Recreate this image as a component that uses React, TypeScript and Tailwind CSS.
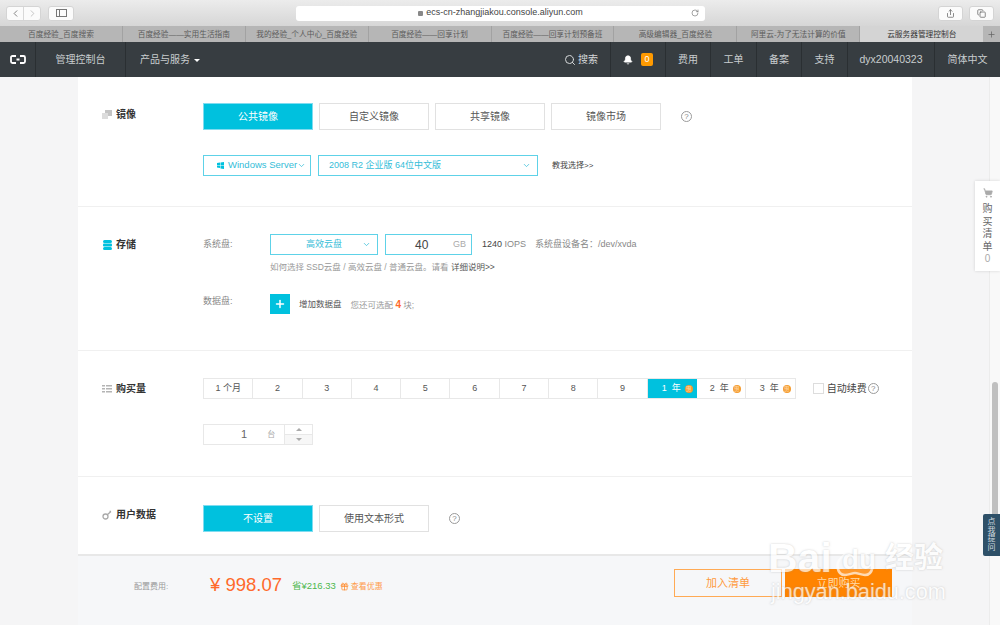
import { Bell, ChevronDown, ChevronLeft, ChevronRight, Copy, Gift, Plus, RotateCw, Search, Share, ShoppingCart } from "lucide-react";

const tabs = [
  "百度经验_百度搜索",
  "百度经验——实用生活指南",
  "我的经验_个人中心_百度经验",
  "百度经验——回享计划",
  "百度经验——回享计划预备班",
  "高级编辑器_百度经验",
  "阿里云-为了无法计算的价值",
];

const durations = ["1 个月", "2", "3", "4", "5", "6", "7", "8", "9"];

function Help({ className = "" }: { className?: string }) {
  return (
    <span className={`flex h-[11px] w-[11px] items-center justify-center rounded-full border border-[#9a9a9a] text-[8px] leading-none text-[#8a8a8a] ${className}`}>
      ?
    </span>
  );
}

function Coin() {
  return (
    <span className="ml-[4px] flex h-[8px] w-[8px] items-center justify-center rounded-full bg-[#f59a2c] text-[6px] leading-none text-[#ffd9a8]">
      惠
    </span>
  );
}

function Choice({ label, active = false }: { label: string; active?: boolean }) {
  return (
    <div
      className={`flex h-[27px] w-[110px] items-center justify-center border text-[10px] ${
        active ? "border-[#7fdcf0] bg-[#00c1de] text-white" : "border-[#e1e1e1] bg-white text-[#555]"
      }`}
    >
      {label}
    </div>
  );
}

export default function App() {
  return (
    <div
      className="relative flex h-[625px] w-[1000px] flex-col overflow-hidden bg-[#f5f5f6]"
      style={{ fontFamily: '"Liberation Sans", "Noto Sans CJK SC", sans-serif' }}
    >
      {/* Safari toolbar */}
      <div className="flex h-[26px] items-center bg-gradient-to-b from-[#ececec] to-[#d6d6d6] pl-[6px] pr-[6px]">
        <div className="flex h-[15px] w-[35px] rounded-[3px] border border-[#d4d4d4] bg-[#fbfbfb] text-[#777]">
          <div className="flex flex-1 items-center justify-center border-r border-[#d8d8d8]">
            <ChevronLeft size={11} />
          </div>
          <div className="flex flex-1 items-center justify-center text-[#c0c0c0]">
            <ChevronRight size={11} />
          </div>
        </div>
        <div className="ml-[7px] flex h-[15px] w-[26px] items-center justify-center rounded-[3px] border border-[#d4d4d4] bg-[#fbfbfb]">
          <div className="flex h-[8px] w-[11px] border border-[#777]">
            <div className="w-[3px] border-r border-[#777]" />
          </div>
        </div>
        <div className="relative ml-[222px] flex h-[15px] w-[409px] items-center justify-center rounded-[3px] bg-white text-[9px] text-[#444]">
          <span className="mr-[3px] h-[5px] w-[5px] rounded-[1px] bg-[#888]" />
          ecs-cn-zhangjiakou.console.aliyun.com
          <RotateCw size={8} className="absolute right-[6px] text-[#777]" />
        </div>
        <div className="ml-auto flex gap-[6px]">
          <div className="flex h-[15px] w-[25px] items-center justify-center rounded-[3px] border border-[#d4d4d4] bg-[#fbfbfb] text-[#666]">
            <Share size={9} />
          </div>
          <div className="flex h-[15px] w-[25px] items-center justify-center rounded-[3px] border border-[#d4d4d4] bg-[#fbfbfb] text-[#666]">
            <Copy size={9} />
          </div>
        </div>
      </div>

      {/* tabs */}
      <div className="flex h-[16px] bg-[#b6b6b6] text-[7.700px] text-[#5b5b5b]">
        {tabs.map((t) => (
          <div key={t} className="flex w-[122.900px] items-center justify-center border-r border-[#a2a2a2] pt-px">
            {t}
          </div>
        ))}
        <div className="flex w-[123px] items-center justify-center bg-[#d4d4d4] pt-px text-[#333]">云服务器管理控制台</div>
        <div className="flex flex-1 items-center justify-center bg-[#b6b6b6] text-[#666]">
          <Plus size={9} />
        </div>
      </div>

      {/* console nav */}
      <div className="flex h-[35px] items-center bg-[#373d41] text-[10px] text-[#c9cdcf]">
        <div className="flex h-full w-[36px] items-center justify-center border-r border-[#2a2f32]">
          <svg width="16" height="9" viewBox="0 0 16 9" fill="none" stroke="#fff" strokeWidth="1.8">
            <path d="M6 1H2.500Q1 1 1 2.500v4Q1 8 2.500 8H6M10 1h3.500Q15 1 15 2.500v4Q15 8 13.500 8H10M6.500 4.500h3" />
          </svg>
        </div>
        <div className="flex h-full w-[90px] items-center justify-center border-r border-[#2a2f32]">管理控制台</div>
        <div className="flex items-center pl-[14px]">
          产品与服务
          <span className="ml-[4px] mt-px h-0 w-0 border-x-[3px] border-t-[3px] border-x-transparent border-t-white" />
        </div>
        <div className="ml-auto flex h-full items-center">
          <div className="flex h-full w-[46px] items-center text-[#d5d8d9]">
            <Search size={12} className="mr-[2px]" />
            搜索
          </div>
          <div className="flex h-full w-[55px] items-center justify-center gap-[8px] border-l border-[#2a2f32]">
            <Bell size={10} fill="#fff" color="#fff" />
            <span className="flex h-[13px] w-[12px] items-center justify-center rounded-[2px] bg-[#ff9a00] text-[9px] text-white">0</span>
          </div>
          <div className="flex h-full w-[45px] items-center justify-center border-l border-[#2a2f32]">费用</div>
          <div className="flex h-full w-[46px] items-center justify-center border-l border-[#2a2f32]">工单</div>
          <div className="flex h-full w-[45px] items-center justify-center border-l border-[#2a2f32]">备案</div>
          <div className="flex h-full w-[46px] items-center justify-center border-l border-[#2a2f32]">支持</div>
          <div className="flex h-full w-[87px] items-center justify-center border-l border-[#2a2f32] text-[10.500px]">dyx20040323</div>
          <div className="flex h-full w-[66px] items-center justify-center border-l border-[#2a2f32]">简体中文</div>
        </div>
      </div>

      {/* page body */}
      <div className="ml-[78px] flex w-[834px] flex-1 flex-col bg-white text-[#666]">
        {/* image */}
        <section className="h-[130px] border-b border-[#f0f0f0] pt-[26px]">
          <div className="flex">
            <div className="flex w-[125px] items-center pl-[24px] pb-[5px]">
              <span className="relative mr-[4px] h-[9px] w-[10px]">
                <span className="absolute right-0 top-0 h-[6px] w-[7px] bg-[#c4c4c4]" />
                <span className="absolute bottom-0 left-0 h-[6px] w-[6px] bg-[#dcdcdc]" />
              </span>
              <span className="text-[10px] font-bold text-[#333]">镜像</span>
            </div>
            <div className="flex gap-[6px]">
              <Choice label="公共镜像" active />
              <Choice label="自定义镜像" />
              <Choice label="共享镜像" />
              <Choice label="镜像市场" />
            </div>
            <Help className="ml-[20px] mt-[8px]" />
          </div>
          <div className="ml-[125px] mt-[25px] flex items-center text-[#35bdd8]">
            <div className="relative flex h-[21px] w-[108px] items-center whitespace-nowrap border border-[#5ed2e8] pl-[13px] text-[9.500px]">
              <svg width="7" height="7" viewBox="0 0 7 7" className="mr-[4px] shrink-0" fill="#00c1de">
                <path d="M0 1l3-.5V3H0zM3.500.4L7 0v3H3.500zM0 3.500h3V6L0 5.600zM3.500 3.500H7V7l-3.500-.5z" />
              </svg>
              Windows Server
              <ChevronDown size={9} className="absolute right-[4px]" />
            </div>
            <div className="relative ml-[7px] flex h-[21px] w-[220px] items-center border border-[#5ed2e8] pl-[10px] text-[9px]">
              2008 R2 企业版 64位中文版
              <ChevronDown size={9} className="absolute right-[6px]" />
            </div>
            <span className="ml-[14px] text-[8px] text-[#444]">教我选择&gt;&gt;</span>
          </div>
        </section>

        {/* storage */}
        <section className="h-[144px] border-b border-[#f0f0f0] pt-[27px]">
          <div className="flex">
            <div className="flex w-[125px] items-center pl-[25px]">
              <svg width="9" height="10" viewBox="0 0 9 10" fill="#00c1de" className="mr-[4px]">
                <rect y="0" width="9" height="3" rx="1.500" />
                <rect y="3.500" width="9" height="3" rx="1" />
                <rect y="7" width="9" height="3" rx="1.500" />
              </svg>
              <span className="text-[10px] font-bold text-[#333]">存储</span>
            </div>
            <div className="flex w-[67px] items-center text-[9px] text-[#888]">系统盘:</div>
            <div className="relative flex h-[21px] w-[108px] items-center justify-center border border-[#5ed2e8] text-[9px] text-[#35bdd8]">
              高效云盘
              <ChevronDown size={9} className="absolute right-[6px]" />
            </div>
            <div className="ml-[7px] flex h-[21px] w-[87px] items-center border border-[#5ed2e8] pl-[29px] text-[12px] text-[#444]">
              40
              <span className="ml-auto pr-[5px] text-[9px] text-[#aaa]">GB</span>
            </div>
            <div className="ml-[10px] flex items-center text-[9px] text-[#888]">
              <span className="text-[#444]">1240&nbsp;</span>IOPS
              <span className="ml-[9px]">系统盘设备名：/dev/xvda</span>
            </div>
          </div>
          <p className="ml-[192px] mt-[6px] text-[8.500px] leading-[13px] text-[#999]">
            如何选择 SSD云盘 / 高效云盘 / 普通云盘。请看 <span className="text-[#555]">详细说明&gt;&gt;</span>
          </p>
          <div className="mt-[20px] flex">
            <div className="w-[192px] pl-[125px] pt-px text-[9px] leading-[13px] text-[#888]">数据盘:</div>
            <div className="flex h-[20px] w-[20px] items-center justify-center bg-[#00c1de] text-white">
              <Plus size={12} strokeWidth={3} />
            </div>
            <div className="ml-[9px] flex items-center text-[8.500px]">
              <span className="text-[#555]">增加数据盘</span>
              <span className="ml-[9px] text-[#999]">
                您还可选配 <span className="text-[10px] font-bold text-[#ff6a2b]">4</span> 块;
              </span>
            </div>
          </div>
        </section>

        {/* quantity */}
        <section className="h-[126px] border-b border-[#f0f0f0] pt-[27px]">
          <div className="flex">
            <div className="flex w-[125px] items-center pl-[24px]">
              <svg width="10" height="8" viewBox="0 0 10 8" fill="#b4b4b4" className="mr-[4px]">
                <path d="M0 0h3v1.500H0zM4 0h6v1.500H4zM0 3h3v1.500H0zM4 3h6v1.500H4zM0 6h3v1.500H0zM4 6h6v1.500H4z" />
              </svg>
              <span className="text-[10px] font-bold text-[#333]">购买量</span>
            </div>
            <div className="flex h-[21px] border border-[#e8e8e8] text-[9px] text-[#555]">
              {durations.map((d) => (
                <div key={d} className="flex w-[49.300px] items-center justify-center border-r border-[#e8e8e8]">
                  {d}
                </div>
              ))}
              <div className="flex w-[49px] items-center justify-end bg-[#00c1de] pr-[4px] text-white">
                1&nbsp;&nbsp;年<Coin />
              </div>
              <div className="flex w-[49px] items-center justify-end border-r border-[#e8e8e8] pr-[4px]">
                2&nbsp;&nbsp;年<Coin />
              </div>
              <div className="flex w-[49px] items-center justify-end pr-[4px]">
                3&nbsp;&nbsp;年<Coin />
              </div>
            </div>
            <div className="ml-[17px] flex items-center text-[10px] text-[#444]">
              <span className="mr-[3px] h-[11px] w-[11px] border border-[#ddd]" />
              自动续费
              <Help className="ml-px" />
            </div>
          </div>
          <div className="ml-[125px] mt-[25px] flex h-[21px] w-[110px] border border-[#e8e8e8] text-[#666]">
            <div className="flex w-[80px] items-center pl-[37px] text-[11px]">
              1<span className="ml-[20px] text-[8px] text-[#aaa]">台</span>
            </div>
            <div className="flex flex-1 flex-col border-l border-[#e8e8e8]">
              <div className="flex flex-1 items-center justify-center border-b border-[#e8e8e8]">
                <span className="h-0 w-0 border-x-[3px] border-b-[3px] border-x-transparent border-b-[#aaa]" />
              </div>
              <div className="flex flex-1 items-center justify-center bg-[#f7f7f7]">
                <span className="h-0 w-0 border-x-[3px] border-t-[3px] border-x-transparent border-t-[#aaa]" />
              </div>
            </div>
          </div>
        </section>

        {/* user data */}
        <section className="flex h-[77px] pt-[28px]">
          <div className="flex h-[19px] w-[125px] items-center pl-[24px]">
            <svg width="10" height="10" viewBox="0 0 10 10" fill="none" stroke="#aaa" strokeWidth="1.300" className="mr-[4px]">
              <circle cx="3.500" cy="6.500" r="2.500" />
              <path d="M5.500 4.500 9 1.500M7.500 1.500H9" />
            </svg>
            <span className="text-[10px] font-bold text-[#333]">用户数据</span>
          </div>
          <div className="flex gap-[6px]">
            <Choice label="不设置" active />
            <Choice label="使用文本形式" />
          </div>
          <Help className="ml-[20px] mt-[8px]" />
        </section>

        {/* price footer */}
        <footer className="flex flex-1 items-start border-t-2 border-[#e8e8e8] bg-[#f6f7f9] pr-[20px] pt-[13px]">
          <div className="mt-[2px] flex h-[28px] items-center">
            <span className="ml-[56px] mt-[3px] w-[76px] text-[8px] text-[#999]">配置费用:</span>
            <span className="text-[18.500px] leading-none text-[#ff6a2b]">¥ 998.07</span>
            <span className="ml-[10px] mt-[3px] text-[9.500px] text-[#4cb84c]">省¥216.33</span>
            <Gift size={9} className="ml-[4px] mt-[3px] text-[#ff8a2b]" />
            <span className="ml-[2px] mt-[3px] text-[8px] text-[#ff9a4a]">查看优惠</span>
          </div>
          <div className="ml-auto flex h-[28px] w-[108px] items-center justify-center border border-[#ffaa55] text-[11px] text-[#ff9a3c]">加入清单</div>
          <div className="ml-[3px] flex h-[28px] w-[107px] items-center justify-center bg-[#ff8400] text-[11px] text-[#ffd9a8]">立即购买</div>
        </footer>
      </div>

      {/* scrollbar */}
      <div className="absolute bottom-0 right-0 top-[77px] w-[11px] border-l border-[#ececec] bg-[#f9f9f9]">
        <div className="absolute left-[2px] top-[305px] h-[150px] w-[6px] rounded-full bg-[#c0c0c0]" />
      </div>

      {/* cart float */}
      <div className="absolute right-0 top-[181px] flex h-[90px] w-[25px] flex-col items-center bg-white pt-[7px] text-[10px] leading-[12.500px] text-[#666] shadow-[0_0_3px_rgba(0,0,0,0.15)]">
        <ShoppingCart size={10} fill="#aaa" className="mb-[5px] text-[#aaa]" />
        <span>购</span>
        <span>买</span>
        <span>清</span>
        <span>单</span>
        <span className="text-[#aaa]">0</span>
      </div>

      {/* ask float */}
      <div className="absolute right-0 top-[514px] flex h-[42px] w-[17px] flex-col items-center justify-center rounded-l-[2px] bg-[#2e5068] text-[8px] leading-[8.500px] text-[#cfd8de]">
        <span>点</span>
        <span>我</span>
        <span>提</span>
        <span>问</span>
      </div>

      {/* baidu watermark */}
      <div className="pointer-events-none absolute left-[768px] top-[516px] h-[100px] w-[180px] text-white opacity-70">
        <svg width="60" height="62" viewBox="0 0 60 62" fill="#fff" fillOpacity="0.25" stroke="#fff" strokeWidth="2.500" className="absolute left-[57px] top-0">
          <ellipse cx="12" cy="22" rx="5" ry="8" transform="rotate(-15 12 22)" />
          <ellipse cx="23" cy="12" rx="5" ry="8" />
          <ellipse cx="37" cy="12" rx="5" ry="8" />
          <ellipse cx="48" cy="20" rx="5" ry="8" transform="rotate(15 48 20)" />
          <path d="M30 33c6 0 9 5 14 9 6 5 4 17-4 17-4 0-7-2-10-2s-6 2-10 2c-8 0-10-12-4-17 5-4 8-9 14-9z" />
        </svg>
        <span className="absolute left-0 top-[22px] text-[41px] font-bold leading-none [text-shadow:0_0_2px_rgba(150,150,150,0.7)]">Bai</span>
        <span className="absolute left-[74px] top-[30px] text-[28px] font-bold leading-none [text-shadow:0_0_2px_rgba(150,150,150,0.7)]">du</span>
        <span className="absolute left-[117px] top-[28px] whitespace-nowrap text-[29px] font-bold leading-none [text-shadow:0_0_2px_rgba(150,150,150,0.7)]">经验</span>
        <span className="absolute left-[3px] top-[65px] whitespace-nowrap text-[21.700px] leading-none [text-shadow:0_0_2px_rgba(150,150,150,0.7)]">jingyan.baidu.com</span>
      </div>
    </div>
  );
}
